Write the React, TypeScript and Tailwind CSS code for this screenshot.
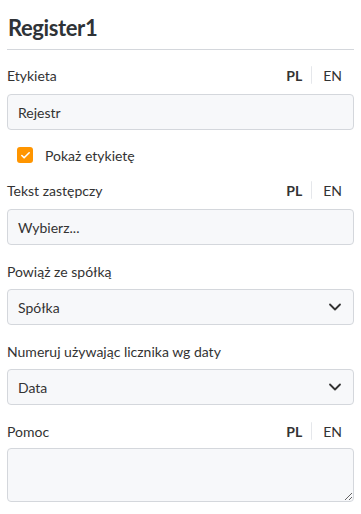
import { ChevronDown, Check } from "lucide-react";

const font = { fontFamily: 'Lato, "Noto Sans", sans-serif' };

function LangSwitch() {
  return (
    <div className="flex items-center text-[14px] text-[#333]">
      <span className="font-bold pr-[9px]">PL</span>
      <span className="h-[18px] w-px rounded-r-full border-r border-[#e5e7eb]" />
      <span className="pl-[11px] pr-[12px]">EN</span>
    </div>
  );
}

function Label({ text, lang }: { text: string; lang?: boolean }) {
  return (
    <div className="flex h-[20px] items-center justify-between">
      <span className="text-[14px] text-[#333]">{text}</span>
      {lang && <LangSwitch />}
    </div>
  );
}

function TextField({ value }: { value: string }) {
  return (
    <div className="flex h-[36px] items-center rounded-[4px] border border-[#d4d7dc] bg-[#f7f8fa] px-[10px] text-[14px] text-[#333]">
      {value}
    </div>
  );
}

function SelectField({ value }: { value: string }) {
  return (
    <div className="flex h-[36px] items-center justify-between rounded-[4px] border border-[#d4d7dc] bg-[#f7f8fa] pl-[10px] pr-[8px] text-[14px] text-[#333]">
      <span>{value}</span>
      <ChevronDown className="h-[20px] w-[20px] text-[#333]" strokeWidth={2.2} />
    </div>
  );
}

export default function App() {
  return (
    <div className="bg-white px-[7px] pt-[12px]" style={font}>
      <h1 className="pl-[1px] text-[22px] font-bold leading-[32px] tracking-[-0.4px] text-[#2f3337]">
        Register1
      </h1>
      <div className="mt-[5px] border-t border-[#d4d7dc]" />

      <div className="mt-[15px] flex flex-col">
        <Label text="Etykieta" lang />
        <div className="mt-[9px]">
          <TextField value="Rejestr" />
        </div>

        <div className="mt-[17px] flex h-[16px] items-center gap-[12px] pl-[10px]">
          <span className="flex h-[16px] w-[16px] items-center justify-center rounded-[3px] bg-[#ff9500]">
            <Check className="h-[11px] w-[11px] text-white" strokeWidth={3.5} />
          </span>
          <span className="text-[14px] text-[#333]">Pokaż etykietę</span>
        </div>

        <div className="mt-[17px]">
          <Label text="Tekst zastępczy" lang />
        </div>
        <div className="mt-[9px]">
          <TextField value="Wybierz..." />
        </div>

        <div className="mt-[16px]">
          <Label text="Powiąż ze spółką" />
        </div>
        <div className="mt-[8px]">
          <SelectField value="Spółka" />
        </div>

        <div className="mt-[16px]">
          <Label text="Numeruj używając licznika wg daty" />
        </div>
        <div className="mt-[8px]">
          <SelectField value="Data" />
        </div>

        <div className="mt-[16px]">
          <Label text="Pomoc" lang />
        </div>
        <textarea
          className="mt-[7px] block h-[54px] w-full resize-y rounded-[4px] border border-[#d4d7dc] bg-[#f7f8fa] px-[10px] py-[6px] text-[14px] text-[#333] outline-none"
          style={font}
        />
      </div>
    </div>
  );
}
